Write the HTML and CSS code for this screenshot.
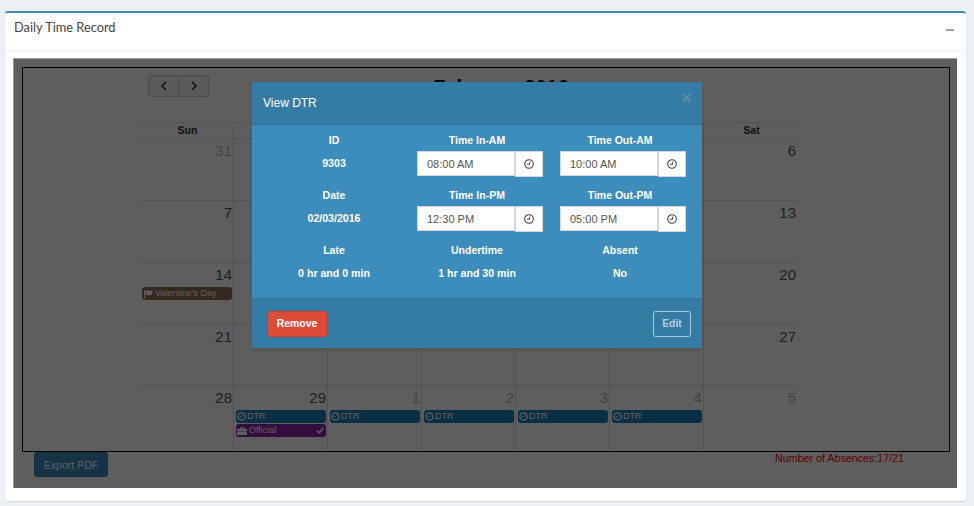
FILE: index.html
```html
<!doctype html>
<html>
  <head>
    <meta charset="utf-8">
    <title>Daily Time Record</title>
    <link rel="stylesheet" href="styles.css">
  </head>
  <body>
    <div class="box">
      <div class="box-header">
        <h3>Daily Time Record</h3>
        <span class="collapse-btn"></span>
      </div>
      <div class="box-body">
        <div class="calendar-frame">
          <div class="toolbar">
            <div class="btn-group">
              <button class="nav-btn">
                <svg width="8" height="10" viewBox="0 0 8 10"><path d="M6 1 2 5l4 4" fill="none" stroke="#333" stroke-width="1.6"/></svg>
              </button>
              <button class="nav-btn">
                <svg width="8" height="10" viewBox="0 0 8 10"><path d="M2 1l4 4-4 4" fill="none" stroke="#333" stroke-width="1.6"/></svg>
              </button>
            </div>
            <h2>February 2016</h2>
          </div>
          <div class="calendar">
            <div class="day-names">
              <div>Sun</div><div></div><div></div><div></div><div></div><div></div><div>Sat</div>
            </div>
            <div class="week">
              <div class="cell muted">31</div><div class="cell"></div><div class="cell"></div><div class="cell"></div><div class="cell"></div><div class="cell"></div><div class="cell">6</div>
            </div>
            <div class="week">
              <div class="cell">7</div><div class="cell"></div><div class="cell"></div><div class="cell"></div><div class="cell"></div><div class="cell"></div><div class="cell">13</div>
            </div>
            <div class="week">
              <div class="cell">14
                <div class="event holiday">
                  <svg width="9" height="8" viewBox="0 0 9 8"><path d="M0 0h1v8H0zM1.5.5c1.7-.8 2.9.5 4.2.3.9-.1 1.7-.4 2.5-.7v4.6c-.8.4-1.6.7-2.5.8-1.3.1-2.5-.9-4.2-.3z" fill="#fff"/></svg>
                  Valentine's Day
                </div>
              </div>
              <div class="cell"></div><div class="cell"></div><div class="cell"></div><div class="cell"></div><div class="cell"></div><div class="cell">20</div>
            </div>
            <div class="week short">
              <div class="cell">21</div><div class="cell"></div><div class="cell"></div><div class="cell"></div><div class="cell"></div><div class="cell"></div><div class="cell">27</div>
            </div>
            <div class="week last">
              <div class="cell">28</div>
              <div class="cell">29
                <div class="event dtr">
                  <svg width="9" height="9" viewBox="0 0 10 10"><circle cx="5" cy="5" r="4" fill="none" stroke="#fff" stroke-width="1.5"/><path d="M7 3 4.5 5.5H3" fill="none" stroke="#fff"/></svg>
                  DTR
                </div>
                <div class="event official">
                  <svg width="10" height="9" viewBox="0 0 11 10"><path d="M0 3h11v2.5H0zM0 6h11v4H0zM3.5 3V1h4v2h-1V2h-2v1z" fill="#fff"/></svg>
                  Official
                  <svg class="check" width="8" height="7" viewBox="0 0 10 8"><path d="M1 4l3 3 5-6" fill="none" stroke="#fff" stroke-width="2"/></svg>
                </div>
              </div>
              <div class="cell muted">1
                <div class="event dtr"><svg width="9" height="9" viewBox="0 0 10 10"><circle cx="5" cy="5" r="4" fill="none" stroke="#fff" stroke-width="1.5"/><path d="M7 3 4.5 5.5H3" fill="none" stroke="#fff"/></svg> DTR</div>
              </div>
              <div class="cell muted">2
                <div class="event dtr"><svg width="9" height="9" viewBox="0 0 10 10"><circle cx="5" cy="5" r="4" fill="none" stroke="#fff" stroke-width="1.5"/><path d="M7 3 4.5 5.5H3" fill="none" stroke="#fff"/></svg> DTR</div>
              </div>
              <div class="cell muted">3
                <div class="event dtr"><svg width="9" height="9" viewBox="0 0 10 10"><circle cx="5" cy="5" r="4" fill="none" stroke="#fff" stroke-width="1.5"/><path d="M7 3 4.5 5.5H3" fill="none" stroke="#fff"/></svg> DTR</div>
              </div>
              <div class="cell muted">4
                <div class="event dtr"><svg width="9" height="9" viewBox="0 0 10 10"><circle cx="5" cy="5" r="4" fill="none" stroke="#fff" stroke-width="1.5"/><path d="M7 3 4.5 5.5H3" fill="none" stroke="#fff"/></svg> DTR</div>
              </div>
              <div class="cell muted">5</div>
            </div>
          </div>
        </div>
        <div class="below">
          <button class="export-btn">Export PDF</button>
          <span class="absences">Number of Absences:17/21</span>
        </div>

        <div class="backdrop"></div>

        <div class="modal">
          <div class="modal-header">
            <h4>View DTR</h4>
            <span class="close">×</span>
          </div>
          <div class="modal-body">
            <div class="field"><label>ID</label><div class="value">9303</div></div>
            <div class="field"><label>Time In-AM</label>
              <div class="time-input"><input type="text" value="08:00 AM"><span class="addon"><svg width="10" height="10" viewBox="0 0 10 10"><circle cx="5" cy="5" r="4.3" fill="none" stroke="#444" stroke-width="1.1"/><path d="M5.8 2.6 5.4 5.3H3" fill="none" stroke="#444"/></svg></span></div>
            </div>
            <div class="field"><label>Time Out-AM</label>
              <div class="time-input"><input type="text" value="10:00 AM"><span class="addon"><svg width="10" height="10" viewBox="0 0 10 10"><circle cx="5" cy="5" r="4.3" fill="none" stroke="#444" stroke-width="1.1"/><path d="M5.8 2.6 5.4 5.3H3" fill="none" stroke="#444"/></svg></span></div>
            </div>
            <div class="field"><label>Date</label><div class="value">02/03/2016</div></div>
            <div class="field"><label>Time In-PM</label>
              <div class="time-input"><input type="text" value="12:30 PM"><span class="addon"><svg width="10" height="10" viewBox="0 0 10 10"><circle cx="5" cy="5" r="4.3" fill="none" stroke="#444" stroke-width="1.1"/><path d="M5.8 2.6 5.4 5.3H3" fill="none" stroke="#444"/></svg></span></div>
            </div>
            <div class="field"><label>Time Out-PM</label>
              <div class="time-input"><input type="text" value="05:00 PM"><span class="addon"><svg width="10" height="10" viewBox="0 0 10 10"><circle cx="5" cy="5" r="4.3" fill="none" stroke="#444" stroke-width="1.1"/><path d="M5.8 2.6 5.4 5.3H3" fill="none" stroke="#444"/></svg></span></div>
            </div>
            <div class="field"><label>Late</label><div class="value">0 hr and 0 min</div></div>
            <div class="field"><label>Undertime</label><div class="value">1 hr and 30 min</div></div>
            <div class="field"><label>Absent</label><div class="value">No</div></div>
          </div>
          <div class="modal-footer">
            <button class="btn-remove">Remove</button>
            <button class="btn-edit">Edit</button>
          </div>
        </div>
      </div>
    </div>
  </body>
</html>
```
FILE: styles.css
```css
html, body {
  height: 100%;
}

body {
  margin: 0;
  padding: 11px 8px 5px 5px;
  box-sizing: border-box;
  background: #ecf0f5;
  font: 12px/16px "Liberation Sans", sans-serif;
  color: #333;
  overflow: hidden;
}

button {
  font: inherit;
}

.box {
  background: white;
  border-top: 2px solid #3c8dbc;
  border-radius: 3px;
  box-shadow: 0 1px 1px rgba(0, 0, 0, 0.1);
  height: 490px;
  box-sizing: border-box;
}

.box-header {
  display: flex;
  justify-content: space-between;
  height: 38px;
  padding: 5px 12px 0 9px;
  box-sizing: border-box;
  border-bottom: 1px solid #f4f4f4;
}

.box-header h3 {
  margin: 0;
  font: 400 12.8px/18px Lato, sans-serif;
  color: #444;
}

.collapse-btn {
  width: 8px;
  height: 2px;
  margin-top: 11px;
  background: #97a0b3;
}

.box-body {
  position: relative;
  margin: 7px 9px 0 8px;
  height: 430px;
  padding: 9px 7px 0 9px;
  box-sizing: border-box;
}

.calendar-frame {
  height: 385px;
  border: 1px solid black;
  box-sizing: border-box;
  padding-top: 7px;
}

.toolbar {
  display: flow-root;
  position: relative;
  height: 47px;
  margin: 0 120px 0 150px;
  text-align: center;
}

.toolbar h2 {
  margin: -1px 0 0;
  font: 700 20px/26px "Liberation Sans", sans-serif;
  color: black;
}

.btn-group {
  position: absolute;
  left: -25px;
  top: 0;
  display: flex;
}

.nav-btn {
  width: 31px;
  height: 22px;
  padding: 0;
  display: flex;
  align-items: center;
  justify-content: center;
  background: #f5f5f5;
  border: 1px solid #ccc;
}

.nav-btn:first-child {
  border-radius: 3px 0 0 3px;
}

.nav-btn:last-child {
  border-radius: 0 3px 3px 0;
  margin-left: -1px;
}

.calendar {
  width: 657px;
  margin-left: 117px;
  color: #555;
}

.day-names,
.week {
  display: grid;
  grid-template-columns: 93px repeat(6, 94px);
}

.day-names {
  height: 17px;
  border-top: 1px solid #ddd;
  border-bottom: 1px solid #ddd;
  box-sizing: border-box;
  color: #333;
  font-weight: 700;
  font-size: 10.5px;
  line-height: 15px;
  text-align: center;
}

.day-names div {
  padding-left: 2px;
}

.day-names div + div {
  border-left: 1px solid #ddd;
}

.week {
  height: 62px;
  box-sizing: border-box;
  border-bottom: 1px solid #ddd;
}

.week.short {
  height: 61px;
}

.week.last {
  height: 63px;
  border-bottom: 0;
}

.cell {
  padding: 3px 1px 0 2px;
  box-sizing: border-box;
  text-align: right;
  font-size: 15px;
  line-height: 18px;
  min-width: 0;
}

.cell + .cell {
  border-left: 1px solid #ddd;
}

.cell.muted {
  color: #b5b5b5;
}

.event {
  display: flex;
  align-items: center;
  gap: 2px;
  height: 13px;
  margin-bottom: 1px;
  padding: 0 2px 0 1px;
  border-radius: 3px;
  color: white;
  font-size: 9px;
  line-height: 13px;
  text-align: left;
  white-space: nowrap;
}

.event:first-of-type {
  margin-top: 3px;
}

.event.holiday {
  padding-left: 2px;
  background: #8a6a55;
}

.event.dtr {
  gap: 1px;
  background: #1a7fc0;
}

.event.official {
  background: #8e24aa;
}

.event .check {
  margin-left: auto;
}

.below {
  display: flex;
  justify-content: space-between;
  padding: 0 46px 0 12px;
}

.export-btn {
  width: 74px;
  height: 25px;
  padding: 0;
  border: 1px solid #367fa9;
  border-radius: 3px;
  background: #3c8dbc;
  color: white;
  font-size: 10.5px;
}

.absences {
  margin-top: -2px;
  font-size: 10.7px;
  color: #f00;
}

.backdrop {
  position: absolute;
  inset: 0;
  background: rgba(0, 0, 0, 0.63);
  border-left: 1px solid #999;
  border-top: 1px solid #999;
}

.modal {
  position: absolute;
  left: 239px;
  top: 24px;
  width: 450px;
  background: #3c8dbc;
  color: white;
  box-shadow: 0 2px 3px rgba(0, 0, 0, 0.125);
}

.modal-header {
  display: flex;
  justify-content: space-between;
  height: 43px;
  padding: 13px 10px 0 11px;
  box-sizing: border-box;
  background: #357ca5;
  border-bottom: 1px solid #31739a;
}

.modal-header h4 {
  margin: 0;
  font: 400 12px/16px "Liberation Sans", sans-serif;
}

.close {
  margin-top: -5px;
  font: 700 18px/16px "Liberation Sans", sans-serif;
  color: #5d8aa6;
}

.modal-body {
  display: grid;
  grid-template-columns: 143px 143px 143px;
  justify-content: center;
  row-gap: 9px;
  padding: 7px 9px 0 9px;
  height: 173px;
  box-sizing: border-box;
  align-content: start;
}

.field {
  text-align: center;
  height: 46px;
}

.field label {
  display: block;
  font-weight: 700;
  font-size: 10.5px;
  line-height: 16px;
}

.value {
  margin-top: 7px;
  font-weight: 700;
  font-size: 10.6px;
  line-height: 16px;
}

.time-input {
  display: flex;
  width: 126px;
  margin: 3px 0 0 11.5px;
}

.time-input input {
  width: 98px;
  height: 25px;
  padding: 1px 9px 0;
  box-sizing: border-box;
  border: 1px solid #d2d6de;
  background: white;
  color: #555;
  font: 11px "Liberation Sans", sans-serif;
}

.addon {
  display: flex;
  align-items: center;
  justify-content: center;
  width: 28px;
  height: 26px;
  box-sizing: border-box;
  background: white;
  border: 1px solid #d2d6de;
}

.modal-footer {
  display: flex;
  justify-content: space-between;
  height: 50px;
  padding: 12px 11px 0 15px;
  box-sizing: border-box;
  background: #357ca5;
  border-top: 1px solid #31739a;
}

.btn-remove {
  width: 60px;
  height: 26px;
  padding: 0 0 1px;
  background: #dd4b39;
  border: 1px solid #d73925;
  border-radius: 3px;
  color: white;
  font-size: 10.4px;
  font-weight: 700;
}

.btn-edit {
  width: 38px;
  height: 26px;
  padding: 0 0 1px;
  background: transparent;
  border: 1px solid #a9c8da;
  border-radius: 3px;
  color: #b4cddd;
  font-size: 10.4px;
  font-weight: 700;
}
```
